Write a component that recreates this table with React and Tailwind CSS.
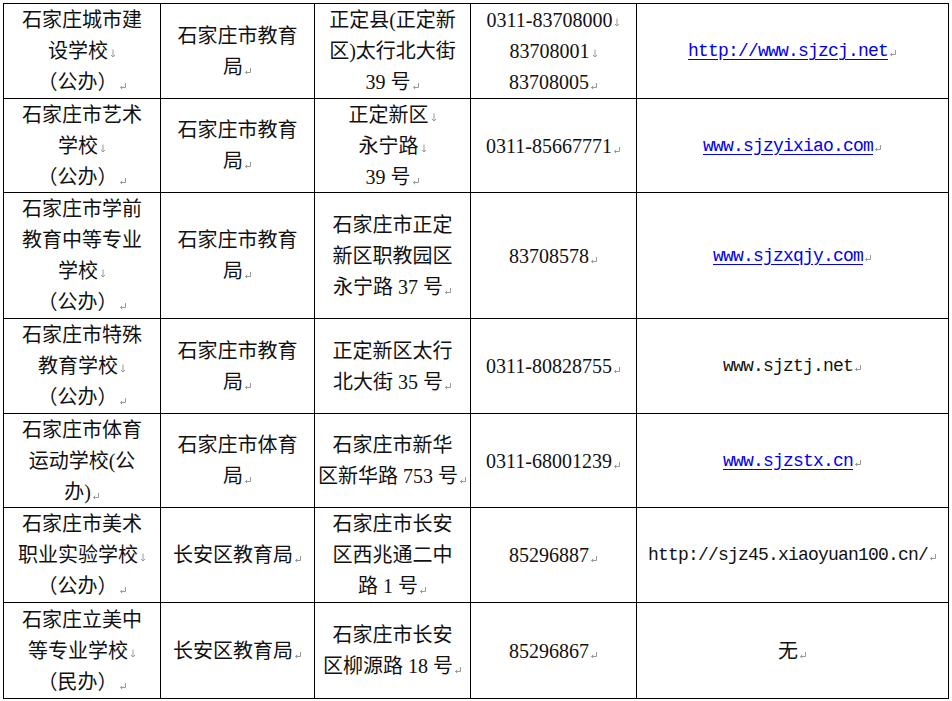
import React from "react";

const rows = [
  {
    h: "h-[95px]",
    cells: [
      ["石家庄城市建", "设学校↓", "（公办）↵"],
      ["石家庄市教育", "局↵"],
      ["正定县(正定新", "区)太行北大街", "39 号↵"],
      ["0311-83708000↓", "83708001↓", "83708005↵"],
    ],
    url: "http://www.sjzcj.net",
    link: true,
  },
  {
    h: "h-[94px]",
    cells: [
      ["石家庄市艺术", "学校↓", "（公办）↵"],
      ["石家庄市教育", "局↵"],
      ["正定新区↓", "永宁路↓", "39 号↵"],
      ["0311-85667771↵"],
    ],
    url: "www.sjzyixiao.com",
    link: true,
  },
  {
    h: "h-[126px]",
    cells: [
      ["石家庄市学前", "教育中等专业", "学校↓", "（公办）↵"],
      ["石家庄市教育", "局↵"],
      ["石家庄市正定", "新区职教园区", "永宁路 37 号↵"],
      ["83708578↵"],
    ],
    url: "www.sjzxqjy.com",
    link: true,
  },
  {
    h: "h-[95px]",
    cells: [
      ["石家庄市特殊", "教育学校↓", "（公办）↵"],
      ["石家庄市教育", "局↵"],
      ["正定新区太行", "北大街 35 号↵"],
      ["0311-80828755↵"],
    ],
    url: "www.sjztj.net",
    link: false,
  },
  {
    h: "h-[94px]",
    cells: [
      ["石家庄市体育", "运动学校(公", "办)↵"],
      ["石家庄市体育", "局↵"],
      ["石家庄市新华", "区新华路 753 号↵"],
      ["0311-68001239↵"],
    ],
    url: "www.sjzstx.cn",
    link: true,
  },
  {
    h: "h-[95px]",
    cells: [
      ["石家庄市美术", "职业实验学校↓", "（公办）↵"],
      ["长安区教育局↵"],
      ["石家庄市长安", "区西兆通二中", "路 1 号↵"],
      ["85296887↵"],
    ],
    url: "http://sjz45.xiaoyuan100.cn/",
    link: false,
  },
  {
    h: "h-[96px]",
    cells: [
      ["石家庄立美中", "等专业学校↓", "（民办）↵"],
      ["长安区教育局↵"],
      ["石家庄市长安", "区柳源路 18 号↵"],
      ["85296867↵"],
    ],
    url: null,
    link: false,
  },
];

function Mark({ c }) {
  if (c === "↵") {
    return (
      <svg width="8" height="8" viewBox="0 0 8 8" className="inline-block align-[-1px] ml-[1px]">
        <path d="M6.5 1 V5.5 H1.5" stroke="#9a9a9a" strokeWidth="1" fill="none" />
        <path d="M3.2 3.8 L1.5 5.5 L3.2 7.2" stroke="#9a9a9a" strokeWidth="1" fill="none" />
      </svg>
    );
  }
  return (
    <svg width="6" height="9" viewBox="0 0 6 9" className="inline-block align-[0px] ml-[2px]">
      <path d="M3 0.5 V8" stroke="#9a9a9a" strokeWidth="1" fill="none" />
      <path d="M1 6 L3 8 L5 6" stroke="#9a9a9a" strokeWidth="1" fill="none" />
    </svg>
  );
}

function Line({ text }) {
  const last = text.slice(-1);
  const has = last === "↵" || last === "↓";
  const body = has ? text.slice(0, -1) : text;
  return (
    <div className="whitespace-nowrap h-[31px] leading-[31px]">
      {body}
      {has && <Mark c={last} />}
    </div>
  );
}

const border = "border-r border-b border-black";

export default function App() {
  return (
    <div className="w-[952px] h-[701px] bg-white overflow-hidden pt-[3px] pl-[3px]">
      <div className="w-[946px] border-l border-t border-black font-['Liberation_Serif','Noto_Sans_CJK_SC',sans-serif] text-[20px] text-[#111]">
        {rows.map((r, i) => (
          <div key={i} className={`flex ${r.h}`}>
            {r.cells.map((lines, j) => (
              <div
                key={j}
                className={`${border} flex flex-col items-center justify-center text-center pt-[1px] ${
                  j === 0 ? "w-[157px]" : j === 1 ? "w-[154px]" : j === 2 ? "w-[156px]" : "w-[166px]"
                }`}
              >
                {lines.map((t, k) => (
                  <Line key={k} text={t} />
                ))}
              </div>
            ))}
            <div className={`${border} w-[312px] flex items-center justify-center pt-[1px]`}>
              {r.url ? (
                <div className="whitespace-nowrap font-['Liberation_Mono',monospace] text-[18px] tracking-[-0.8px] leading-[31px]">
                  <span className={r.link ? "text-[#0000ee] underline underline-offset-[3px]" : "text-[#111]"}>
                    {r.url}
                  </span>
                  <Mark c="↵" />
                </div>
              ) : (
                <Line text="无↵" />
              )}
            </div>
          </div>
        ))}
      </div>
    </div>
  );
}
